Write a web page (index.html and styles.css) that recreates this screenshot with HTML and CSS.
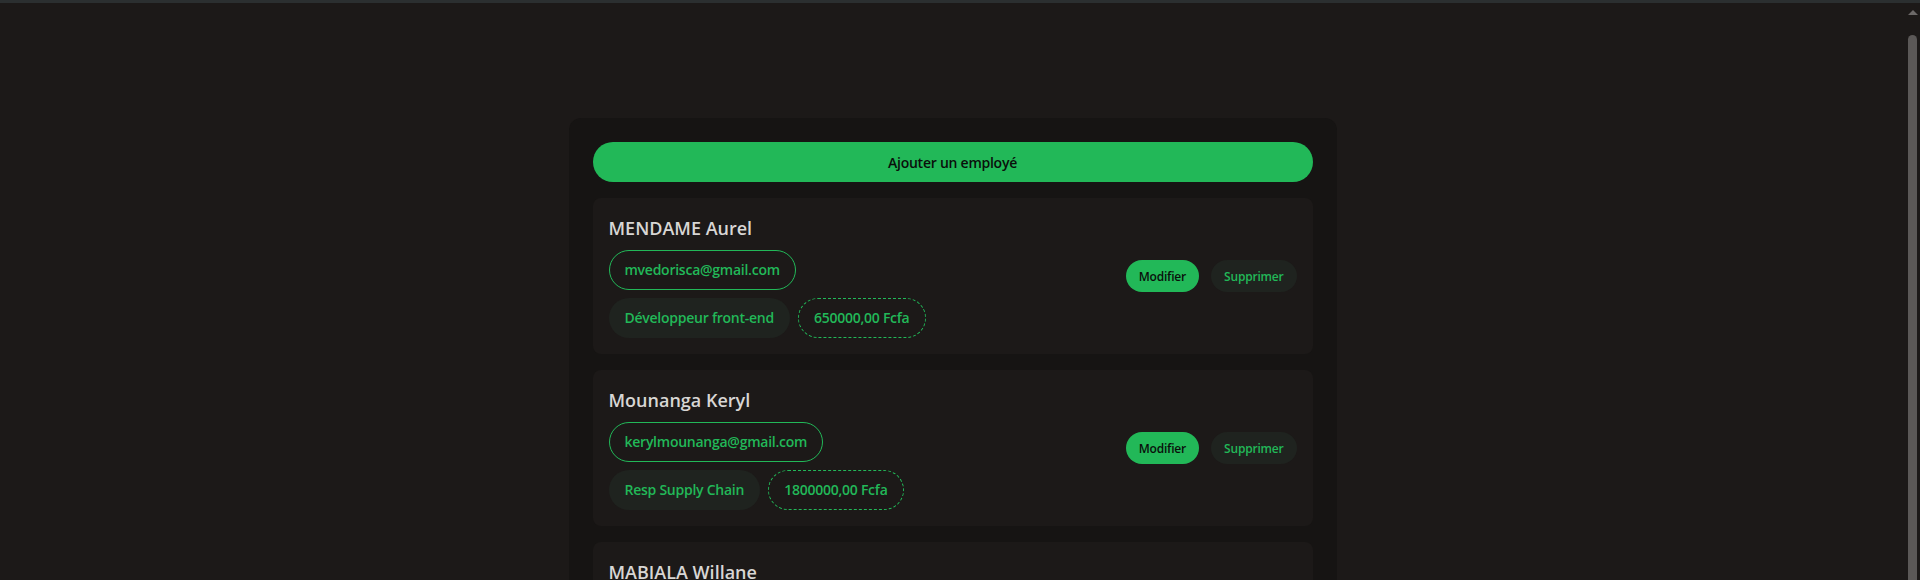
FILE: index.html
```html
<!DOCTYPE html>
<html lang="fr">
<head>
<meta charset="utf-8">
<title>Employés</title>
<link rel="stylesheet" href="styles.css">
</head>
<body>
<div class="topbar"></div>
<div class="frame">
  <div class="scroller">
    <main class="page">
      <section class="panel">
        <button class="add-btn">Ajouter un employé</button>
        <ul class="list">
          <li class="card">
            <div class="info">
              <h2 class="name">MENDAME Aurel</h2>
              <div class="tags">
                <span class="tag tag-outline">mvedorisca@gmail.com</span>
              </div>
              <div class="tags">
                <span class="tag tag-fill">Développeur front-end</span>
                <span class="tag tag-dashed">650000,00 Fcfa</span>
              </div>
            </div>
            <div class="actions">
              <button class="btn btn-edit">Modifier</button>
              <button class="btn btn-delete">Supprimer</button>
            </div>
          </li>
          <li class="card">
            <div class="info">
              <h2 class="name">Mounanga Keryl</h2>
              <div class="tags">
                <span class="tag tag-outline">kerylmounanga@gmail.com</span>
              </div>
              <div class="tags">
                <span class="tag tag-fill">Resp Supply Chain</span>
                <span class="tag tag-dashed">1800000,00 Fcfa</span>
              </div>
            </div>
            <div class="actions">
              <button class="btn btn-edit">Modifier</button>
              <button class="btn btn-delete">Supprimer</button>
            </div>
          </li>
          <li class="card">
            <div class="info">
              <h2 class="name">MABIALA Willane</h2>
              <div class="tags">
                <span class="tag tag-outline">willanemabiala@gmail.com</span>
              </div>
              <div class="tags">
                <span class="tag tag-fill">Comptable</span>
                <span class="tag tag-dashed">900000,00 Fcfa</span>
              </div>
            </div>
            <div class="actions">
              <button class="btn btn-edit">Modifier</button>
              <button class="btn btn-delete">Supprimer</button>
            </div>
          </li>
        </ul>
      </section>
    </main>
  </div>
  <div class="rail" aria-hidden="true">
    <span class="rail-arrow"></span>
    <span class="rail-thumb"></span>
  </div>
</div>
</body>
</html>
```

FILE: styles.css
```css
* {
  box-sizing: border-box;
}

html,
body {
  margin: 0;
  height: 100%;
  overflow: hidden;
  background: #1c1918;
  font-family: "Open Sans", "Noto Sans", "DejaVu Sans", sans-serif;
}

body {
  display: flex;
  flex-direction: column;
}

.topbar {
  height: 3px;
  flex: none;
  background: #2b2f30;
}

.frame {
  flex: 1;
  min-height: 0;
  display: flex;
}

.scroller {
  flex: 1;
  min-width: 0;
  overflow: hidden;
  background: #1c1918;
}

.rail {
  width: 15px;
  flex: none;
  display: flex;
  flex-direction: column;
  align-items: center;
  padding-top: 7px;
  background: #1c1918;
}

.rail-arrow {
  width: 0;
  height: 0;
  border-left: 5px solid transparent;
  border-right: 5px solid transparent;
  border-bottom: 5px solid #6c6968;
}

.rail-thumb {
  flex: 1;
  width: 9px;
  margin-top: 20px;
  border-radius: 5px 5px 0 0;
  background: #5b5857;
}

.page {
  padding: 115px 0 40px;
}

.panel {
  width: 768px;
  margin: 0 auto;
  padding: 24px;
  background: #161413;
  border-radius: 12px;
  display: flex;
  flex-direction: column;
  gap: 16px;
}

.add-btn {
  height: 40px;
  border: none;
  border-radius: 20px;
  background: #22b858;
  color: #0a0f0b;
  font-family: inherit;
  font-size: 14px;
  font-weight: 600;
  letter-spacing: -0.25px;
  cursor: pointer;
}

.list {
  list-style: none;
  margin: 0;
  padding: 0;
  display: flex;
  flex-direction: column;
  gap: 16px;
}

.card {
  background: #1c1918;
  border-radius: 8px;
  padding: 16px;
  display: flex;
  align-items: center;
  justify-content: space-between;
}

.info {
  display: flex;
  flex-direction: column;
  gap: 8px;
}

.name {
  margin: 0;
  font-size: 18px;
  line-height: 28px;
  font-weight: 600;
  color: #d8d6d4;
}

.tags {
  display: flex;
  gap: 8px;
}

.tag {
  display: inline-block;
  padding: 9px 15px;
  border: 1px solid transparent;
  border-radius: 999px;
  font-size: 14px;
  line-height: 20px;
  font-weight: 600;
  letter-spacing: -0.25px;
  color: #22b858;
}

.tag-outline {
  border-color: #22b858;
}

.tag-fill {
  background: #1f231f;
}

.tag-dashed {
  border: 1px dashed #22b858;
}

.actions {
  display: flex;
  gap: 12px;
}

.btn {
  height: 32px;
  padding: 0 13px;
  border: none;
  border-radius: 16px;
  font-family: inherit;
  font-size: 12px;
  font-weight: 600;
  letter-spacing: -0.2px;
  cursor: pointer;
}

.btn-edit {
  background: #22b858;
  color: #0a0f0b;
}

.btn-delete {
  background: #1f231f;
  color: #22b858;
}
```
